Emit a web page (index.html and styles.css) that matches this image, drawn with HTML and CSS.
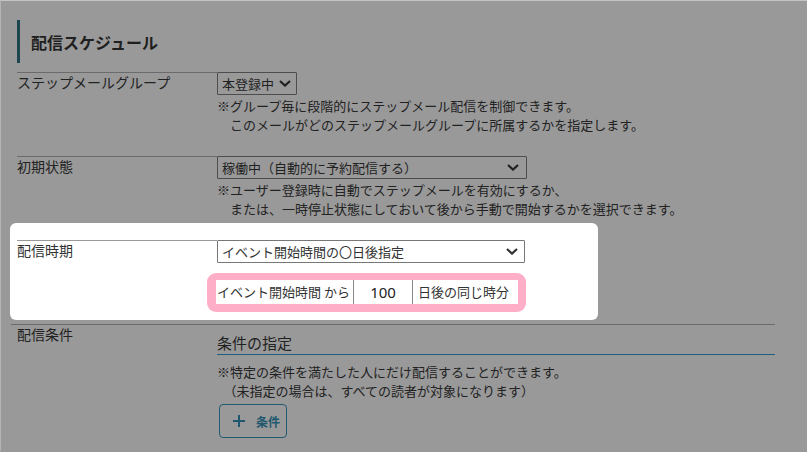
FILE: index.html
```html
<!DOCTYPE html>
<html lang="ja">

<head>
    <meta charset="UTF-8">
    <meta name="viewport" content="width=device-width, initial-scale=1.0">
    <title>配信スケジュール</title>
    <link rel="stylesheet" href="styles.css">
</head>

<body>
    <div class="page">
        <h2 class="section-title">配信スケジュール</h2>

        <div class="row">
            <div class="label">ステップメールグループ</div>
            <div class="field">
                <div class="select select-auto">
                    <span>本登録中</span>
                    <svg class="chevron" width="12" height="7" viewBox="0 0 12 7"><path d="M1 1 L6 5.6 L11 1" /></svg>
                </div>
                <p class="note">※グループ毎に段階的にステップメール配信を制御できます。<br>　このメールがどのステップメールグループに所属するかを指定します。</p>
            </div>
        </div>

        <div class="row">
            <div class="label">初期状態</div>
            <div class="field">
                <div class="select select-wide">
                    <span>稼働中（自動的に予約配信する）</span>
                    <svg class="chevron" width="12" height="7" viewBox="0 0 12 7"><path d="M1 1 L6 5.6 L11 1" /></svg>
                </div>
                <p class="note">※ユーザー登録時に自動でステップメールを有効にするか、<br>　または、一時停止状態にしておいて後から手動で開始するかを選択できます。</p>
            </div>
        </div>

        <div class="highlight">
            <div class="row row-active">
                <div class="label">配信時期</div>
                <div class="field">
                    <div class="select select-timing">
                        <span>イベント開始時間の〇日後指定</span>
                        <svg class="chevron" width="12" height="7" viewBox="0 0 12 7"><path d="M1 1 L6 5.6 L11 1" /></svg>
                    </div>
                    <div class="focus-ring">
                        <div class="input-group">
                            <span class="addon addon-start">イベント開始時間 から</span>
                            <input type="text" class="days-input" value="100">
                            <span class="addon addon-end">日後の同じ時分</span>
                        </div>
                    </div>
                </div>
            </div>
        </div>

        <div class="row row-full">
            <div class="label">配信条件</div>
            <div class="field">
                <h3 class="sub-title">条件の指定</h3>
                <p class="note">※特定の条件を満たした人にだけ配信することができます。<br>　（未指定の場合は、すべての読者が対象になります）</p>
                <button class="add-button">
                    <svg width="12" height="12" viewBox="0 0 12 12"><path d="M6 0 V12 M0 6 H12" /></svg>
                    <span>条件</span>
                </button>
            </div>
        </div>
    </div>
</body>

</html>
```

FILE: styles.css
```css
body {
    margin: 0;
    background: #999999;
    border-top: 1px solid #c4c4c4;
    border-left: 1px solid #b4b4b4;
    min-height: 451px;
    box-sizing: border-box;
    font-family: "Noto Sans CJK JP", "Noto Sans", sans-serif;
    color: #222;
}

.page {
    padding: 19px 32px 0 16px;
}

.section-title {
    margin: 0 0 9px;
    height: 43px;
    display: flex;
    align-items: center;
    border-left: 3px solid #1c4751;
    padding-left: 11px;
    font-size: 16px;
    font-weight: bold;
    color: #1f1f1f;
}

.row {
    display: grid;
    grid-template-columns: 200px 1fr;
    margin-bottom: 22px;
}

.label {
    border-top: 1px solid #6b6b6b;
    font-size: 14px;
    line-height: 18px;
    color: #222;
}

.select {
    box-sizing: border-box;
    height: 23px;
    border: 1px solid #4d4d4d;
    border-radius: 1px;
    display: flex;
    align-items: center;
    padding: 0 7px 0 4px;
    font-size: 13px;
    line-height: 21px;
    white-space: nowrap;
    color: #1f1f1f;
}

.select span {
    flex-shrink: 0;
}

.select-auto {
    width: 80px;
    gap: 5px;
    padding-right: 6px;
}

.select-wide {
    width: 310px;
    justify-content: space-between;
}

.chevron {
    flex-shrink: 0;
}

.chevron path {
    fill: none;
    stroke: #222;
    stroke-width: 2.2;
}

.note {
    margin: 1px 0 0;
    font-size: 13px;
    line-height: 19px;
    color: #222;
}

/* highlighted step */
.highlight {
    background: white;
    border-radius: 6px;
    width: 588px;
    box-sizing: border-box;
    margin: -17px 0 0 -7px;
    padding: 17px 0 8px 7px;
}

.row-active {
    margin-bottom: 0;
}

.row-active .label {
    border-top-color: #999;
    color: #333;
}

.select-timing {
    width: 308px;
    justify-content: space-between;
    border-color: #777;
    color: #333;
    padding-right: 6px;
}

.select-timing .chevron path {
    stroke: #333;
}

.focus-ring {
    display: inline-block;
    margin: 10px 0 0 -10px;
    padding: 7px 8px 8px 9px;
    background: #ffaec8;
    border-radius: 9px;
}

.input-group {
    display: flex;
    height: 24px;
    width: 302px;
    background: white;
    font-size: 13px;
    color: #333;
}

.addon {
    display: flex;
    align-items: center;
    line-height: 24px;
}

.addon-start {
    width: 138px;
    padding-left: 1px;
    box-sizing: border-box;
    border-right: 1px solid #888;
}

.days-input {
    width: 59px;
    box-sizing: border-box;
    border: none;
    border-right: 1px solid #888;
    padding: 0;
    text-align: center;
    font-family: "Noto Sans", sans-serif;
    font-size: 15px;
    color: #222;
    outline: none;
}

.addon-end {
    padding-left: 5px;
}

/* conditions */
.row-full {
    margin: 4px 0 0 -6px;
    padding-left: 6px;
    border-top: 1px solid #6b6b6b;
}

.row-full .label {
    border-top: none;
}

.sub-title {
    margin: 7px 0 0;
    font-size: 15px;
    font-weight: normal;
    line-height: 22px;
    border-bottom: 1px solid #1e5f7e;
    color: #222;
}

.row-full .note {
    margin-top: 7px;
}

.add-button {
    margin: 4px 0 0 2px;
    width: 68px;
    height: 34px;
    box-sizing: border-box;
    background: transparent;
    border: 1px solid #215b71;
    border-radius: 4px;
    padding: 0 0 0 13px;
    display: flex;
    align-items: center;
    gap: 11px;
    font-family: "Noto Sans CJK JP", sans-serif;
    font-size: 12px;
    font-weight: bold;
    color: #1f586e;
}

.add-button svg path {
    stroke: #1f586e;
    stroke-width: 2;
}
```
